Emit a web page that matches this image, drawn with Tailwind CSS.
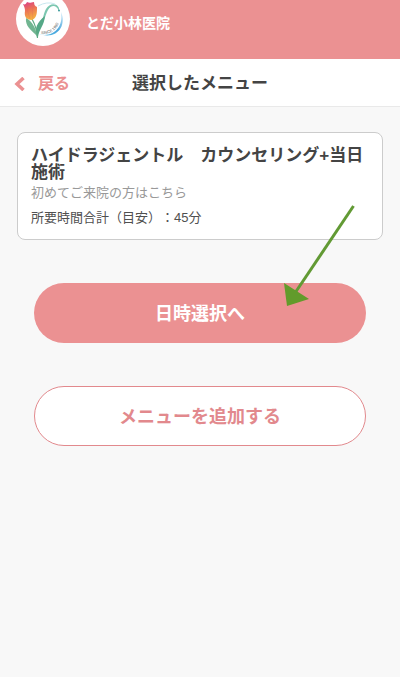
<!DOCTYPE html>
<html lang="ja">
<head>
<meta charset="utf-8">
<meta name="viewport" content="width=device-width, initial-scale=1">
<title>選択したメニュー</title>
<script src="https://cdn.jsdelivr.net/npm/@tailwindcss/browser@4"></script>
</head>
<body class="min-h-screen bg-[#f8f8f8] font-['Liberation_Sans','Noto_Sans_CJK_JP',sans-serif] text-[#444] [text-spacing-trim:space-all]">
<header class="flex h-[59px] items-start gap-4 overflow-hidden bg-[#eb9192] px-4">
  <svg class="-mt-2 size-[54px] shrink-0" viewBox="0 0 54 54" role="img" aria-label="とだ小林医院 ロゴ">
    <defs>
      <linearGradient id="petal" x1="0.2" y1="0" x2="0.5" y2="1">
        <stop offset="0" stop-color="#dc3f86"/><stop offset="0.45" stop-color="#ec7455"/><stop offset="1" stop-color="#f6b540"/>
      </linearGradient>
      <linearGradient id="ring" x1="0" y1="1" x2="1" y2="0">
        <stop offset="0" stop-color="#58bfe5"/><stop offset="0.5" stop-color="#48a5de"/><stop offset="1" stop-color="#c9e8f6"/>
      </linearGradient>
    </defs>
    <circle cx="27" cy="27" r="27" fill="#fff"/>
    <path d="M24 33C27 30 27 22 30 17C33 12 40 10 43 16V19C40 12 35 13 32 18C29 23 29 29 24 33Z" fill="#7cc7b0"/>
    <path d="M22 14Q31 9 39 12" fill="none" stroke="#c9e8ef" stroke-width="1"/>
    <circle cx="43" cy="18.500" r="1" fill="#3b9a9c"/>
    <path d="M45 20C51 34 41 48 23 42C36 46 48 36 45 20Z" fill="url(#ring)"/>
    <path d="M21 45C18 37 21 30 29 24C28 34 23 37 22 45Z" fill="#55a887"/>
    <path d="M21 44C20 36 16 29 10 26C9 34 15 38 21 44Z" fill="#71b591"/>
    <path d="M16 27Q21 36 21.500 46" fill="none" stroke="#5caa82" stroke-width="1.200"/>
    <path d="M7 12C9 13 10 12 11 10C13 11 14 11 18 10C18 13 19 14 21 15C21 21 21 26 16 28C10 28 8 24 9 19C9 16 8 14 7 12Z" fill="url(#petal)"/>
    <path d="M11 11Q11 20 14 27M18 11Q15 19 17 27" fill="none" stroke="#d85e65" stroke-width=".6" opacity=".4"/>
    <path id="since" d="M25 42Q38 43 43 31" fill="none"/>
    <text class="text-[4px]" fill="#555"><textPath href="#since">SINCE 1980</textPath></text>
  </svg>
  <p class="pt-[13px] text-[14px] leading-5 font-bold text-white">とだ小林医院</p>
</header>

<nav class="relative flex h-12 items-center justify-center border-b border-[#e9e9e9] bg-white pt-[2px]">
  <a href="#" class="absolute left-[14px] flex items-center gap-3 text-[16px] leading-6 font-bold text-[#eb9192]">
    <svg class="h-[14px] w-3" viewBox="0 0 12 14" fill="none" stroke="currentColor" stroke-width="3.500" aria-hidden="true"><path d="M9.500 1L3 7L9.500 13"/></svg>
    戻る
  </a>
  <h1 class="text-[17px] leading-6 font-bold">選択したメニュー</h1>
</nav>

<main class="relative px-[17px] pt-[25px]">
  <section class="rounded-lg border border-[#ccc] bg-white px-[13px] pt-[14px] pb-[11px]">
    <h2 class="text-[17px] leading-[17px] font-bold">ハイドラジェントル　カウンセリング+当日施術</h2>
    <p class="mt-[2px] text-[13px] leading-5 text-[#999]">初めてご来院の方はこちら</p>
    <p class="mt-[5px] text-[13px] leading-5 text-[#505050]">所要時間合計（目安）：45分</p>
  </section>
  <div class="mt-[43px] flex flex-col gap-[43px] px-[17px]">
    <button type="button" class="h-[60px] rounded-full bg-[#eb9192] pt-[2px] text-[18px] leading-6 font-bold text-white">日時選択へ</button>
    <button type="button" class="h-[60px] rounded-full border border-[#e2898d] bg-white pt-[2px] text-[18px] leading-6 font-bold text-[#e2898d]">メニューを追加する</button>
  </div>
  <svg class="pointer-events-none absolute top-[98px] right-[45px] h-[102px] w-[72px]" viewBox="0 0 72 102" aria-hidden="true">
    <path d="M70.500 1L12 88" stroke="#629a34" stroke-width="3"/>
    <path d="M1 78L26 94L4 101Z" fill="#629b2b"/>
  </svg>
</main>
</body>
</html>
